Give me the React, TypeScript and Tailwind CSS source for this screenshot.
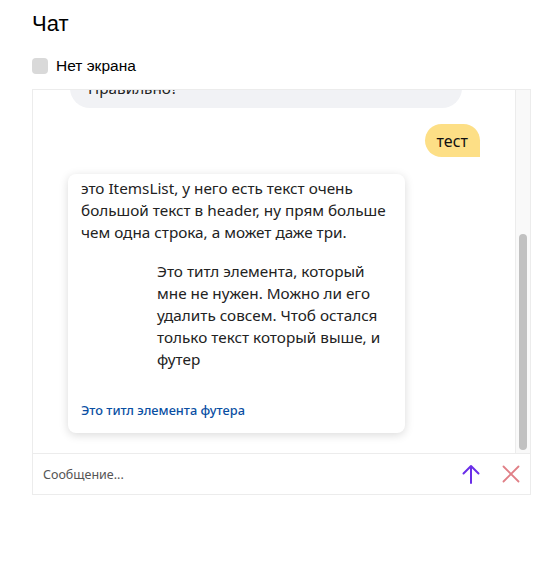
import { FC } from "react";

const ArrowUp: FC = () => (
    <svg width="18" height="20" viewBox="0 0 18 20" fill="none">
        <path d="M9 19V2M1.5 9.5L9 2l7.5 7.5" stroke="#6a2ee8" strokeWidth="2" strokeLinecap="round" strokeLinejoin="round" />
    </svg>
);

const Cross: FC = () => (
    <svg width="18" height="18" viewBox="0 0 18 18" fill="none">
        <path d="M1.5 1.5l15 15M16.5 1.5l-15 15" stroke="#e07f86" strokeWidth="1.8" strokeLinecap="round" />
    </svg>
);

const App: FC = () => {
    return (
        <div className="w-[542px] h-[561px] bg-white px-8 pt-[11px]" style={{ fontFamily: "'Liberation Sans', Arial, sans-serif" }}>
            <h1 className="text-[22px] leading-[26px] text-black">Чат</h1>
            <label className="mt-[19px] flex items-center gap-2 text-[15.5px] leading-[20px] text-black">
                <span className="w-4 h-4 rounded-[4px] bg-[#d9d9d9]" />
                Нет экрана
            </label>

            <div className="mt-[13px] w-[499px] border border-[#ececec] flex flex-col" style={{ fontFamily: "'Noto Sans', sans-serif" }}>
                <div className="flex h-[363px]">
                    <div className="flex-1 overflow-hidden flex flex-col">
                        <div className="ml-[37px] w-[392px] -mt-[22px] bg-[#f1f2f5] rounded-[20px] px-[18px] pt-[8px] pb-[8px] text-[15.3px] leading-[24px] text-[#222]">
                            Правильно?
                        </div>
                        <div className="flex justify-end mt-[16px] mr-[35px]">
                            <div className="bg-[#fddf86] rounded-tl-[17px] rounded-bl-[17px] rounded-tr-[17px] px-[12px] h-[33px] flex items-center text-[16px] text-[#111]">
                                тест
                            </div>
                        </div>
                        <div className="ml-[35px] mt-[17px] w-[337px] bg-white rounded-[8px] shadow-[0_2px_10px_rgba(0,0,0,0.15)] px-[13px] pt-[3px] pb-[15px] text-[15.3px] leading-[22px] text-[#222]">
                            <p>это ItemsList, у него есть текст очень большой текст в header, ну прям больше чем одна строка, а может даже три.</p>
                            <div className="flex mt-[17px]">
                                <div className="w-[76px] shrink-0" />
                                <p className="pr-[6px]">Это титл элемента, который мне не нужен. Можно ли его удалить совсем. Чтоб остался только текст который выше, и футер</p>
                            </div>
                            <a className="block mt-[32px] text-[12.8px] leading-[16px] font-medium text-[#0a4fa3]">Это титл элемента футера</a>
                        </div>
                    </div>
                    <div className="w-[15px] shrink-0 bg-[#f9f9f9] border-l border-[#ececec] flex flex-col justify-end items-center pb-[3px]">
                        <div className="w-[8px] h-[216px] rounded-full bg-[#c1c1c1]" />
                    </div>
                </div>
                <div className="h-[41px] border-t border-[#ececec] flex items-center pl-[10px] pr-[10px]">
                    <span className="flex-1 pt-[2px] text-[12.5px] text-[#555]">Сообщение...</span>
                    <button className="mr-[22px] flex items-center"><ArrowUp /></button>
                    <button className="flex items-center"><Cross /></button>
                </div>
            </div>
        </div>
    );
};

export default App;
